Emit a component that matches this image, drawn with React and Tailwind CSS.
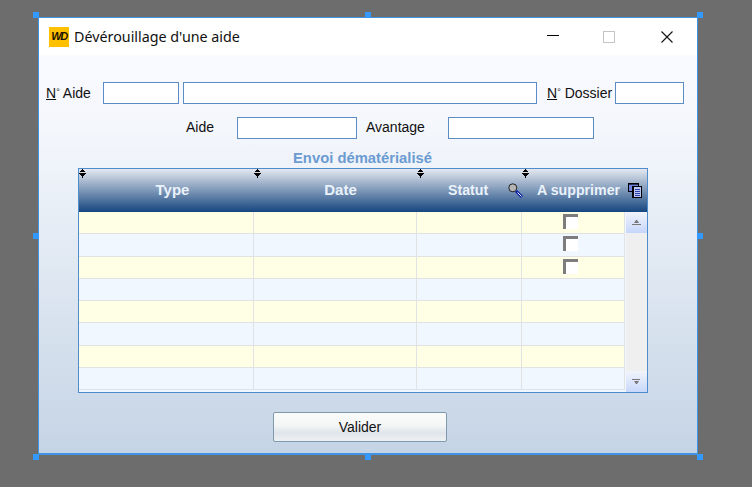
const ROWS = [0, 1, 2, 3, 4, 5, 6, 7];

function Handle({ className }) {
  return <div className={"absolute w-[6px] h-[6px] bg-[#3399ff] " + className} />;
}

function SizeGrip({ className }) {
  return (
    <svg className={"absolute " + className} width="7" height="9" viewBox="0 0 7 9" shapeRendering="crispEdges">
      <path d="M3 0h1v1h1v1h1v1H1V2h1V1h1z M0 4h7v1H0z M1 5h5v1H5v1H4v2H3V7H2V6H1z" fill="#000" />
    </svg>
  );
}

function Field({ className }) {
  return <div className={"h-[22px] bg-white border border-[#5b8cc4] " + className} />;
}

function Label({ children, className }) {
  return (
    <span className={"text-[14px] leading-[20px] mb-[2px] text-[#111] whitespace-nowrap " + className}>
      <span className="underline">N</span>
      <span className="text-[9px] align-[3px]">°</span> {children}
    </span>
  );
}

function HeaderCell({ children, className }) {
  return (
    <div className={"flex items-center font-bold text-[#eaf2fb] whitespace-nowrap " + className}>
      {children}
    </div>
  );
}

function Checkbox() {
  return <div className="w-[15px] h-[15px] bg-white border-l-[3px] border-t-[3px] border-[#7d7d7d]" />;
}

export default function App() {
  return (
    <div className="w-[752px] h-[487px] bg-[#6d6d6d] pl-[38px] pt-[17px] overflow-hidden font-['Liberation_Sans',Arial,sans-serif]">
      <div className="relative w-[660px] h-[438px] border-l border-t border-r border-b-2 border-[#3f94e8] bg-[linear-gradient(to_bottom,#ffffff_0px,#ffffff_37px,#f9faff_38px,#f4f7fc_110px,#c5d4e5_100%)]">
        {/* title bar */}
        <div className="flex items-center h-[37px] pl-[10px]">
          <div className="flex items-center justify-center w-[20px] h-[20px] bg-[#ffc000] text-[11px] font-bold italic tracking-[-1.5px] text-[#1a1400]">
            WD
          </div>
          <span className="ml-[5px] text-[14.3px] text-[#111] font-['Noto_Sans',sans-serif]">Dévérouillage d'une aide</span>
          <div className="flex-1" />
          <div className="w-[12px] h-[1px] bg-black mb-[2px] mr-[44px]" />
          <div className="w-[12px] h-[12px] border border-[#c4c4c4] mr-[46px]" />
          <svg className="mr-[24px]" width="12" height="12" viewBox="0 0 12 12">
            <path d="M0.5 0.5l11 11M11.5 0.5l-11 11" stroke="#111" strokeWidth="1.1" fill="none" />
          </svg>
        </div>

        {/* first row */}
        <div className="flex items-center h-[22px] mt-[27px] pl-[7px]">
          <Label className="w-[57px]">Aide</Label>
          <Field className="w-[76px]" />
          <Field className="w-[354px] ml-[4px]" />
          <Label className="w-[68px] ml-[10px]">Dossier</Label>
          <Field className="w-[69px]" />
        </div>

        {/* second row */}
        <div className="flex items-center h-[22px] mt-[13px] pl-[147px] text-[14px] text-[#111]">
          <span className="w-[51px] mb-[2px]">Aide</span>
          <Field className="w-[120px]" />
          <span className="w-[91px] pl-[9px] mb-[2px]">Avantage</span>
          <Field className="w-[146px]" />
        </div>

        <div className="mt-[10px] ml-[254px] text-[14.8px] leading-[18px] font-bold text-[#6b9bd1]">Envoi dématérialisé</div>

        {/* table */}
        <div className="mt-[1px] ml-[39px] w-[570px] h-[225px] border border-[#4f8ccb] bg-[#f1f7ff] overflow-hidden">
          <div className="relative flex h-[43px] bg-[linear-gradient(to_bottom,#e4e8f0,#16467f)]">
            <SizeGrip className="left-0 top-0" />
            <SizeGrip className="left-[175px] top-0" />
            <SizeGrip className="left-[338px] top-0" />
            <SizeGrip className="left-[443px] top-0" />
            <HeaderCell className="w-[187px] justify-center text-[15px]">Type</HeaderCell>
            <HeaderCell className="w-[149px] justify-center text-[15px]">Date</HeaderCell>
            <HeaderCell className="w-[93px] pl-[33px] text-[14.2px]">Statut</HeaderCell>
            <div className="w-[16px] flex items-center">
              <svg width="15" height="15" viewBox="0 0 15 15">
                <circle cx="4.8" cy="4.8" r="4" fill="#b4b4b4" stroke="#222" strokeWidth="1" />
                <path d="M8 8l6 6" stroke="#0a1ea8" strokeWidth="3" />
                <path d="M9.5 9.5l4 4" stroke="#fff" strokeWidth="1" />
              </svg>
            </div>
            <HeaderCell className="w-[98px] pl-[13px] text-[14.2px]">A supprimer</HeaderCell>
            <div className="flex items-center pl-[6px]">
              <svg width="14" height="15" viewBox="0 0 14 15" shapeRendering="crispEdges">
                <path d="M0.5 0.5h10v8h-10z" fill="#6f82dc" stroke="#000" />
                <path d="M0 0h11v2H0z" fill="#000" fillOpacity="0.6" />
                <path d="M4 3h10v12H4z" fill="#000" />
                <path d="M6 4h7v10H6z" fill="#b9c4f2" />
                <path d="M7 6h5v1H7zM7 8h5v1H7zM7 10h5v1H7zM7 12h5v1H7z" fill="#2f3fa8" />
              </svg>
            </div>
          </div>

          <div className="flex h-[181px]">
            <div className="w-[546px]">
              {ROWS.map((i) => (
                <div
                  key={i}
                  className={"flex h-[22.3px] border-b border-[#e0e2e4] " + (i % 2 === 0 ? "bg-[#ffffe6]" : "bg-[#f1f7ff]")}
                >
                  <div className="w-[175px] border-r border-[#e0e2e4]" />
                  <div className="w-[163px] border-r border-[#e0e2e4]" />
                  <div className="w-[105px] border-r border-[#e0e2e4]" />
                  <div className="flex-1 border-r border-[#e0e2e4] pl-[41px] pt-[2px]">{i < 3 && <Checkbox />}</div>
                </div>
              ))}
            </div>
            <div className="flex flex-col w-[21px] ml-[1px] bg-[#efefef]">
              <div className="flex items-center justify-center h-[21px] bg-[linear-gradient(to_bottom,#f1f4fb,#c6d6fb)]">
                <svg width="9" height="6" viewBox="0 0 9 6"><path d="M4 0h1l2 3H2zM0 4h9v1H0z" fill="#777" /></svg>
              </div>
              <div className="flex-1" />
              <div className="flex items-center justify-center h-[22px] bg-[linear-gradient(to_bottom,#f1f4fb,#c6d6fb)]">
                <svg width="9" height="6" viewBox="0 0 9 6"><path d="M0 0h8v1H0zM2 2h5L5 5H4z" fill="#777" /></svg>
              </div>
            </div>
          </div>
        </div>

        <button className="block mt-[19px] ml-[234px] w-[174px] h-[30px] rounded-[2px] border border-[#7f99ad] bg-[linear-gradient(to_bottom,#fbfbfb,#f4f6f6_45%,#dfe5ea_70%,#eef1f3)] text-[14px] text-[#111]">
          Valider
        </button>

        {/* selection handles */}
        <Handle className="-left-[6px] -top-[6px]" />
        <Handle className="left-[326px] -top-[6px]" />
        <Handle className="-right-[6px] -top-[6px]" />
        <Handle className="-left-[6px] top-[215px]" />
        <Handle className="-right-[6px] top-[215px]" />
        <Handle className="-left-[6px] -bottom-[7px]" />
        <Handle className="left-[326px] -bottom-[7px]" />
        <Handle className="-right-[6px] -bottom-[7px]" />
      </div>
    </div>
  );
}
